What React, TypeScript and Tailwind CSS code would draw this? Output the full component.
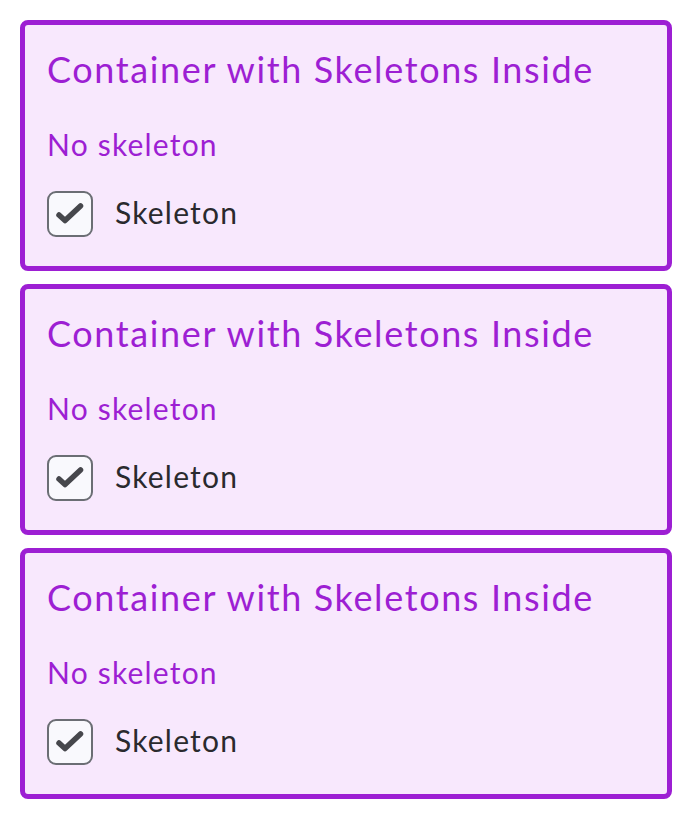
import React from "react";

function Card() {
  return (
    <div className="w-[652px] h-[251px] border-[5px] border-[#9d1fd3] rounded-[8px] bg-[#f8e8fd] px-[22px] pt-[26px] box-border">
      <div className="text-[36px] leading-[36px] tracking-[0.045em] text-[#9d1fd3]">Container with Skeletons Inside</div>
      <div className="mt-[42px] text-[30px] leading-[30px] tracking-[0.04em] text-[#9d1fd3]">No skeleton</div>
      <div className="mt-[32px] flex items-start gap-[22px]">
        <div className="w-[46px] h-[46px] rounded-[9px] border-2 border-[#6b6e74] bg-[#f9f9fd]">
          <svg width="42" height="42" viewBox="0 0 42 42">
            <path d="M10 22 L16 27.5 L31.5 13" fill="none" stroke="#46474c" strokeWidth="5.5" strokeLinecap="round" strokeLinejoin="round" />
          </svg>
        </div>
        <div className="mt-[6px] text-[30px] leading-[30px] tracking-[0.04em] text-[#2a2a2e]">Skeleton</div>
      </div>
    </div>
  );
}

export default function App() {
  return (
    <div className="pl-[20px] pt-[20px] flex flex-col gap-[13px] bg-white min-h-[820px]" style={{ fontFamily: "Lato, sans-serif" }}>
      <Card />
      <Card />
      <Card />
    </div>
  );
}
